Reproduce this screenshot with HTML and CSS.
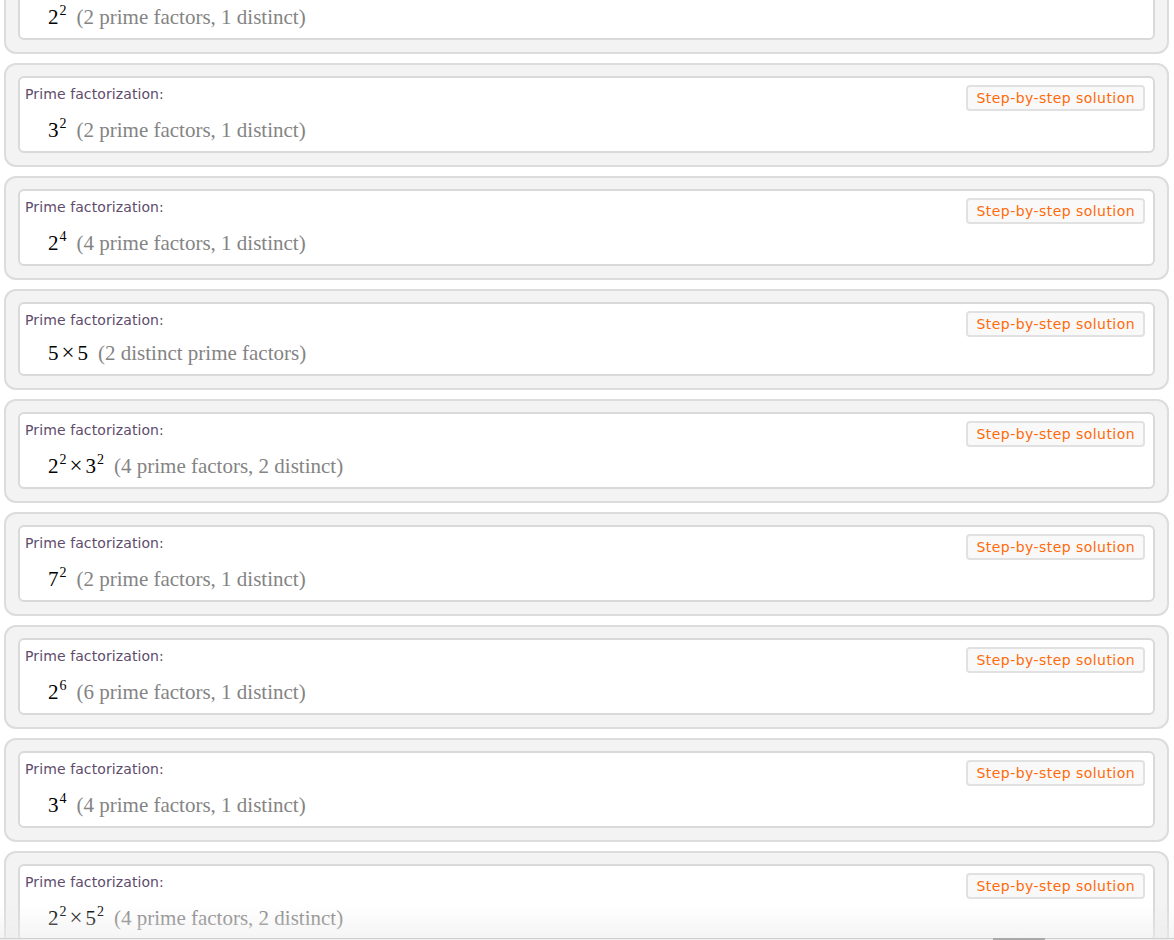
FILE: index.html
```html
<!DOCTYPE html>
<html>
<head>
<meta charset="utf-8">
<link rel="stylesheet" href="styles.css">
</head>
<body>
<div class="pods">
  <section class="pod">
    <div class="card">
      <div class="head"><span class="title">Prime factorization:</span><span class="step">Step-by-step solution</span></div>
      <div class="value">2<span class="sup">2</span><span class="note">(2 prime factors, 1 distinct)</span></div>
    </div>
  </section>
  <section class="pod">
    <div class="card">
      <div class="head"><span class="title">Prime factorization:</span><span class="step">Step-by-step solution</span></div>
      <div class="value">3<span class="sup">2</span><span class="note">(2 prime factors, 1 distinct)</span></div>
    </div>
  </section>
  <section class="pod">
    <div class="card">
      <div class="head"><span class="title">Prime factorization:</span><span class="step">Step-by-step solution</span></div>
      <div class="value">2<span class="sup">4</span><span class="note">(4 prime factors, 1 distinct)</span></div>
    </div>
  </section>
  <section class="pod">
    <div class="card">
      <div class="head"><span class="title">Prime factorization:</span><span class="step">Step-by-step solution</span></div>
      <div class="value plain">5<span class="times">×</span>5<span class="note">(2 distinct prime factors)</span></div>
    </div>
  </section>
  <section class="pod">
    <div class="card">
      <div class="head"><span class="title">Prime factorization:</span><span class="step">Step-by-step solution</span></div>
      <div class="value">2<span class="sup">2</span><span class="times">×</span>3<span class="sup">2</span><span class="note">(4 prime factors, 2 distinct)</span></div>
    </div>
  </section>
  <section class="pod">
    <div class="card">
      <div class="head"><span class="title">Prime factorization:</span><span class="step">Step-by-step solution</span></div>
      <div class="value">7<span class="sup">2</span><span class="note">(2 prime factors, 1 distinct)</span></div>
    </div>
  </section>
  <section class="pod">
    <div class="card">
      <div class="head"><span class="title">Prime factorization:</span><span class="step">Step-by-step solution</span></div>
      <div class="value">2<span class="sup">6</span><span class="note">(6 prime factors, 1 distinct)</span></div>
    </div>
  </section>
  <section class="pod">
    <div class="card">
      <div class="head"><span class="title">Prime factorization:</span><span class="step">Step-by-step solution</span></div>
      <div class="value">3<span class="sup">4</span><span class="note">(4 prime factors, 1 distinct)</span></div>
    </div>
  </section>
  <section class="pod">
    <div class="card">
      <div class="head"><span class="title">Prime factorization:</span><span class="step">Step-by-step solution</span></div>
      <div class="value">2<span class="sup">2</span><span class="times">×</span>5<span class="sup">2</span><span class="note">(4 prime factors, 2 distinct)</span></div>
    </div>
  </section>
</div>
<div class="fade"></div>
<div class="hscroll"><div class="thumb"></div></div>
</body>
</html>
```

FILE: styles.css
```css
html, body {
  margin: 0;
  padding: 0;
  background: #ffffff;
  overflow: hidden;
}

.pods {
  display: flex;
  flex-direction: column;
  gap: 9px;
  margin-top: -50px;
  padding: 0 5px 40px 4px;
}

.pod {
  background: #f3f3f3;
  border: 2px solid #dcdcdc;
  border-radius: 12px;
  padding: 11px 12px 12px 12px;
}

.card {
  background: #ffffff;
  border: 2px solid #d9d9d9;
  border-radius: 6px;
  padding: 7px 9px 9px 5px;
}

.head {
  display: flex;
  justify-content: space-between;
  align-items: flex-start;
}

.title {
  margin-top: 1px;
  font-family: "DejaVu Sans", sans-serif;
  font-size: 14px;
  line-height: 17px;
  letter-spacing: 0.1px;
  color: #5e4c6c;
}

.step {
  box-sizing: border-box;
  height: 26px;
  margin-right: -1px;
  padding: 0 8px;
  border: 2px solid #e1e1e1;
  border-radius: 4px;
  background: #f9f9f9;
  font-family: "DejaVu Sans", sans-serif;
  font-size: 14px;
  line-height: 22px;
  letter-spacing: 0.45px;
  color: #ff6a0a;
  white-space: nowrap;
}

.value {
  margin-top: 7px;
  padding-left: 23px;
  font-family: "Liberation Serif", "Times New Roman", serif;
  font-size: 21px;
  line-height: 24px;
  color: #000000;
}

.value.plain {
  margin-top: 4px;
}

.sup {
  font-size: 14px;
  line-height: 0;
  vertical-align: 9px;
  margin-left: 1px;
}

.times {
  margin: 0 3px 0 3px;
  font-size: 23px;
}

.note {
  margin-left: 10px;
  color: #848484;
}

.fade {
  position: fixed;
  left: 0;
  right: 0;
  bottom: 2px;
  height: 34px;
  background: linear-gradient(to bottom, rgba(240, 240, 240, 0), rgba(236, 236, 236, 0.55));
  pointer-events: none;
}

.hscroll {
  position: fixed;
  left: 0;
  right: 0;
  bottom: 0;
  height: 2px;
  background: #efefef;
  border-top: 1px solid #cfcfcf;
  box-sizing: border-box;
}

.thumb {
  position: absolute;
  left: 993px;
  top: -1px;
  width: 52px;
  height: 2px;
  background: #a9a9a9;
}
```
